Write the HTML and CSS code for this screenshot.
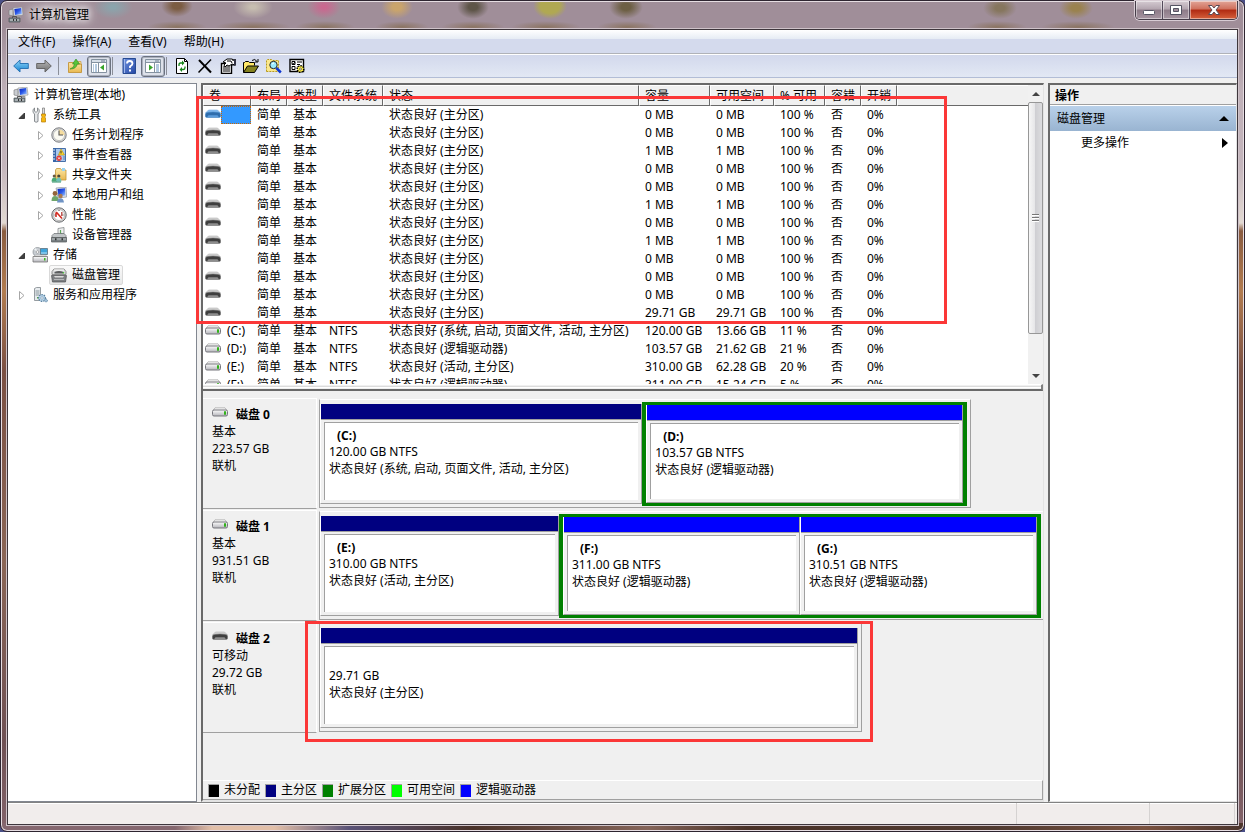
FILE: index.html
```html
<!DOCTYPE html>
<html lang="zh-CN">
<head>
<meta charset="utf-8">
<title>计算机管理</title>
<link rel="stylesheet" href="styles.css">
</head>
<body>
<svg class="defs" aria-hidden="true">
  <defs>
    <linearGradient id="gScreen" x1="0" y1="0" x2="1" y2="1"><stop offset="0" stop-color="#0a22b8"/><stop offset=".5" stop-color="#2a58e8"/><stop offset="1" stop-color="#a8d0ff"/></linearGradient>
    <linearGradient id="gBlue" x1="0" y1="0" x2="0" y2="1"><stop offset="0" stop-color="#8fd4f8"/><stop offset="1" stop-color="#1583d2"/></linearGradient>
    <linearGradient id="gGray" x1="0" y1="0" x2="0" y2="1"><stop offset="0" stop-color="#b8b8b8"/><stop offset="1" stop-color="#6e6e6e"/></linearGradient>
    <linearGradient id="gMetal" x1="0" y1="0" x2="0" y2="1"><stop offset="0" stop-color="#fdfdfd"/><stop offset="1" stop-color="#b4b4ba"/></linearGradient>
    <linearGradient id="gFolder" x1="0" y1="0" x2="0" y2="1"><stop offset="0" stop-color="#fbe6a4"/><stop offset="1" stop-color="#e8b850"/></linearGradient>
    <linearGradient id="gHelp" x1="0" y1="0" x2="1" y2="1"><stop offset="0" stop-color="#6f92e0"/><stop offset="1" stop-color="#2447a4"/></linearGradient>
  </defs>
  <symbol id="computer" viewBox="0 0 16 16">
    <path d="M1 3l4-1v7l-4-1z" fill="#c9ccd0" stroke="#777" stroke-width=".6"/><path d="M5 1l9-1 1 8-9 1z" fill="#e4e6e8" stroke="#8a8d90" stroke-width=".6"/>
    <path d="M6.3 1.9l6.8-.8.8 6-6.8.8z" fill="url(#gScreen)"/><path d="M9 9h3l1 1.5H8z" fill="#999"/>
    <path d="M1 11h11v4H1z" fill="#7c8589" stroke="#4c5356" stroke-width=".7"/><path d="M4.500 11V9.500h4V11" fill="none" stroke="#555" stroke-width="1"/><path d="M2 13h9" stroke="#cfd6d8"/><path d="M5 12h1v2H5zM8 12h1v2H8z" fill="#333"/>
  </symbol>
  <symbol id="tools" viewBox="0 0 16 16">
    <path d="M2.500 1v3l1.500 1.500L5.500 4V1C7.500 2 8 5 6 7v7.500q-2 1.500-3.500 0V7C0 5 1 2 2.500 1z" fill="#e4e6e8" stroke="#6d7276" stroke-width=".8"/>
    <path d="M10.500 1h2v6h-2z" fill="#ddd" stroke="#777" stroke-width=".7"/><path d="M9.500 7h4v2l-1 1 1 1v4h-4v-4l1-1-1-1z" fill="#f7b80e" stroke="#b47a05" stroke-width=".7"/>
  </symbol>
  <symbol id="clock" viewBox="0 0 16 16">
    <circle cx="8" cy="8" r="7.200" fill="#d6d8da" stroke="#6f7174" stroke-width=".9"/><circle cx="8" cy="8" r="5.600" fill="#fbfaf2" stroke="#a8a8a8" stroke-width=".6"/>
    <path d="M8 8V2.400A5.600 5.600 0 0 1 13.600 8z" fill="#f5dda0"/><path d="M8 3.500V8h4" fill="none" stroke="#555" stroke-width="1.100"/>
  </symbol>
  <symbol id="events" viewBox="0 0 16 16">
    <path d="M2.500 1.500h12v13h-12z" fill="#a9c8ee" stroke="#466fa8"/><path d="M2 1h3v14H2z" fill="#3766a8"/><path d="M1 3h3M1 6h3M1 9h3M1 12h3" stroke="#e6eef8"/>
    <path d="M10 2l3.500 6h-6z" fill="#ffd92e" stroke="#b58d05" stroke-width=".6"/><path d="M10 4v2.500" stroke="#333"/><circle cx="8" cy="11.300" r="2.700" fill="#e23c38"/><path d="M7 10.300l2 2m0-2l-2 2" stroke="#fff" stroke-width=".8"/><path d="M12 10h2M12 12h2" stroke="#5b83ba"/>
  </symbol>
  <symbol id="shared" viewBox="0 0 16 16">
    <path d="M4.500 3l1-1.500h4l1 1.500h4.500v10h-10.500z" fill="url(#gFolder)" stroke="#c29536" stroke-width=".8"/><path d="M11 1h3v3h-3z" fill="#9ad4f2"/>
    <circle cx="3.300" cy="9" r="1.600" fill="#6b5a40"/><circle cx="7.800" cy="9" r="1.600" fill="#4e4638"/><path d="M.5 14.500q.3-4 2.800-4t2.700 4z" fill="#4aa873"/><path d="M5 14.500q.5-4 2.800-4t2.700 4z" fill="#6fbfb8"/><path d="M1 15h9" stroke="#2c8f68"/>
  </symbol>
  <symbol id="users" viewBox="0 0 16 16">
    <path d="M5 1l10-1 .7 10L7 11z" fill="#dfe3ea" stroke="#7f8792" stroke-width=".6"/><path d="M6.500 2l7.500-.8.5 7.300-7 .7z" fill="url(#gScreen)"/>
    <circle cx="4" cy="6.500" r="2.400" fill="#93653a"/><path d="M.5 14q0-5 3.500-5t4 5z" fill="#6fa66a"/><circle cx="9.500" cy="9" r="2.200" fill="#a9794e"/><path d="M6 15.500q.5-4.300 3.500-4.300t3.500 4.300z" fill="#6f93c4"/>
  </symbol>
  <symbol id="perf" viewBox="0 0 16 16">
    <circle cx="8" cy="8" r="7.200" fill="#d8d8d8" stroke="#66696c"/><circle cx="8" cy="8" r="5.500" fill="#fff" stroke="#999" stroke-width=".6"/>
    <path d="M5 10V5.500M5.200 5l5.800 6.500" stroke="#d42b22" stroke-width="1.600"/><path d="M10.800 5v4" stroke="#b43b35" stroke-width="1.300"/><path d="M8 3v1M3.500 8h1M11.500 8h1" stroke="#444"/>
  </symbol>
  <symbol id="device" viewBox="0 0 16 16">
    <path d="M7 1.500l6-1v8H7z" fill="#eef0f0" stroke="#85898c" stroke-width=".8"/><path d="M9.500 3v3.500h2" fill="none" stroke="#5aa958" stroke-width="1.200"/>
    <path d="M1 8.500l2-2h10l2 2V11H1z" fill="#c1c5c7" stroke="#676c6f" stroke-width=".7"/><path d="M.5 10.500h15v4.500H.5z" fill="#7b8285" stroke="#515658" stroke-width=".7"/><path d="M1 12h14" stroke="#c0c5c7"/><path d="M4 11.300h1.500v2H4zM10.500 11.300H12v2h-1.500z" fill="#303436"/>
  </symbol>
  <symbol id="storage" viewBox="0 0 16 16">
    <circle cx="5.500" cy="5" r="4.500" fill="#c8cdd2" stroke="#868c90" stroke-width=".7"/><path d="M5.500 5L2 2.500 4 1z" fill="#f0f4f6"/><circle cx="5.500" cy="5" r="1.300" fill="#fff" stroke="#777" stroke-width=".5"/>
    <path d="M8.500 1.500h7v6h-7z" fill="#3fa4dc" stroke="#5d7280" stroke-width=".8"/><path d="M9 6h6" stroke="#b7dff4"/>
    <path d="M2 9.500l1.500-1.500h10L15 9.500z" fill="#eee" stroke="#999" stroke-width=".5"/><path d="M1 9.500h14.500v5.500H1z" fill="url(#gMetal)" stroke="#777" stroke-width=".8"/><path d="M12 11h1.500v2.500H12z" fill="#39b926"/>
  </symbol>
  <symbol id="diskmgr" viewBox="0 0 16 16">
    <path d="M1 4.500l2-2.500h10l2 2.500v3H1z" fill="#d9dadb" stroke="#777" stroke-width=".8"/><path d="M3.500 5q4.500-2 9 0v1.500h-9z" fill="#5a5c5e"/><path d="M3 3h10" stroke="#fff"/><circle cx="12.500" cy="5.800" r=".8" fill="#4c3"/>
    <path d="M.5 8.500h15l-1 6.500h-13z" fill="#7d7f82" stroke="#4c4e50" stroke-width=".7"/><path d="M3 9h10l-1 1.500h-8z" fill="#dadada"/><path d="M3 12.500h10" stroke="#b5b7b9"/>
  </symbol>
  <symbol id="services" viewBox="0 0 16 16">
    <path d="M2.500 1.500l2-1h4v13h-6z" fill="#e7ebee" stroke="#7e878c" stroke-width=".8"/><path d="M3.500 4h4M3.500 6h4M3.500 8h4" stroke="#8b989e"/><path d="M5 10h2v1.500H5z" fill="#57a34d"/>
    <circle cx="10" cy="11" r="3.400" fill="#b8d3e8" stroke="#58809e" stroke-width="1.200" stroke-dasharray="1.500 1"/><circle cx="10" cy="11" r="1.200" fill="#fff" stroke="#58809e" stroke-width=".5"/><circle cx="14" cy="13.500" r="1.500" fill="#a5c3db" stroke="#58809e" stroke-width=".8" stroke-dasharray="1 .6"/>
  </symbol>
  <symbol id="drive" viewBox="0 0 16 10">
    <path d="M3 .8h10l2 2.700H1z" fill="#f4f4f4" stroke="#b0b0b0" stroke-width=".8"/><rect x=".5" y="3" width="15" height="6" rx="1.500" fill="url(#gMetal)" stroke="#77777d"/><path d="M12 4.300h2v3.400h-2z" fill="#32b21a"/>
  </symbol>
  <symbol id="removable" viewBox="0 0 16 10">
    <path d="M3.500 1h9l3 3H.5z" fill="#d4d4d4" stroke="#b4b4b4" stroke-width=".6"/><path d="M.3 5.200Q.5 3.600 3 3.300q5-.8 10 0 2.500.3 2.700 1.900v2q-.3 1.300-1.700 1.300H2Q.6 8.500.3 7.200z" fill="#3f3f3f" stroke="#8a8a8a" stroke-width=".6"/><path d="M3.500 6.300h9l1.300 1.700H2.200z" fill="#8e8e8e"/>
  </symbol>
  <symbol id="removable-sel" viewBox="0 0 16 10">
    <path d="M3.500 1h9l3 3H.5z" fill="#86bdf0" stroke="#7ab0e4" stroke-width=".6"/><path d="M.3 5.200Q.5 3.600 3 3.300q5-.8 10 0 2.500.3 2.700 1.900v2q-.3 1.300-1.700 1.300H2Q.6 8.500.3 7.200z" fill="#2f6dac" stroke="#4f90cf" stroke-width=".6"/><path d="M3.500 6.300h9l1.300 1.700H2.200z" fill="#5b9cdc"/>
  </symbol>
  <symbol id="back" viewBox="0 0 16 16"><path d="M.7 8L7 2v3.500h8.300v5H7V14z" fill="url(#gBlue)" stroke="#2b75b5" stroke-linejoin="round"/></symbol>
  <symbol id="forward" viewBox="0 0 16 16"><path d="M15.300 8L9 2v3.500H.7v5H9V14z" fill="url(#gGray)" stroke="#666" stroke-linejoin="round"/></symbol>
  <symbol id="folderup" viewBox="0 0 16 16"><path d="M1.500 4.500h5l1 1.500h7v8.500h-13z" fill="url(#gFolder)" stroke="#c79b45"/><path d="M9 3.500h5V6H9z" fill="#f8dc94" stroke="#c79b45" stroke-width=".7"/><path d="M3 11q4-1 4.500-5H5.500L9 1l3.500 5h-2.300Q9.500 11 3 11z" fill="#58c43b" stroke="#2c8a1e" stroke-width=".6"/></symbol>
  <symbol id="paneleft" viewBox="0 0 16 16"><path d="M.5 1.500h15v13H.5z" fill="#fff" stroke="#8492a0"/><path d="M1 2h14v2H1z" fill="#d7dfe8"/><path d="M1 4.500h14M7.500 5v9.500" stroke="#8492a0"/><path d="M10 3h4" stroke="#6c7d90"/><path d="M2 7h4M2 9h4M2 11h4M2 13h4" stroke="#6993bf" stroke-dasharray="1 1 2"/><path d="M13 6.500v6L9 9.500z" fill="#37a42a"/></symbol>
  <symbol id="paneright" viewBox="0 0 16 16"><path d="M.5 1.500h15v13H.5z" fill="#fff" stroke="#8492a0"/><path d="M1 2h14v2H1z" fill="#d7dfe8"/><path d="M1 4.500h14M9.500 5v9.500" stroke="#8492a0"/><path d="M10 3h4" stroke="#6c7d90"/><path d="M11 7h3M11 9h3M11 11h3M11 13h3" stroke="#6993bf"/><path d="M4 6.500v6l4-3z" fill="#37a42a"/></symbol>
  <symbol id="help" viewBox="0 0 16 16"><path d="M2 .5h12.500v15H2z" fill="url(#gHelp)" stroke="#264a92"/><path d="M3.500 1v14" stroke="#9fb7ec"/><path d="M6 5.500Q6 3 8.700 3t2.800 2.500Q11.500 7 9 8.500V10" fill="none" stroke="#fff" stroke-width="1.800"/><path d="M8 11.500h2v2H8z" fill="#fff"/></symbol>
  <symbol id="refresh" viewBox="0 0 16 16"><path d="M2.500.5h8l3 3v12h-11z" fill="#fff" stroke="#000"/><path d="M10.500.5v3h3" fill="none" stroke="#000"/><path d="M8 5H6.500Q5 5 5 7v1M8 11.500h1.500q1.500 0 1.500-2v-1" fill="none" stroke="#16851a" stroke-width="1.300"/><path d="M8 2.500v5L10.500 5zM8 9v5l-2.500-2.500z" fill="#16851a"/></symbol>
  <symbol id="delete" viewBox="0 0 16 16"><path d="M2 2l12 12.500" stroke="#000" stroke-width="2"/><path d="M14 1.500L1.500 14.500" stroke="#000" stroke-width="1.500"/></symbol>
  <symbol id="props" viewBox="0 0 16 16"><path d="M1.500 5.500h10v10h-10z" fill="#fff" stroke="#000" stroke-width="1.400"/><path d="M3 9h7M3 11h7M3 13h7" stroke="#000"/><path d="M3 4l4-3h5l3 2v4l-3-1-3 2-2-1-2 2-1-2 2-2z" fill="#fff" stroke="#000"/><path d="M7 3h4l1 2M12 2h4M12 7h4" fill="none" stroke="#000"/><path d="M14 1h2v6h-2z" fill="#334"/></symbol>
  <symbol id="open" viewBox="0 0 16 16"><path d="M.5 14.500v-10h1l1-1h3l1 1h5v3" fill="#ffe868" stroke="#000"/><path d="M.5 14.500l4-6.500h11l-4 6.500z" fill="#84821e" stroke="#000"/><path d="M9 2.500q3-2.500 5 1M12 4h3V1" fill="none" stroke="#000"/></symbol>
  <symbol id="find" viewBox="0 0 16 16"><path d="M.5 13.500v-11l1-1h4l1 1h6v11z" fill="#fbe88a" stroke="#b99c1e" stroke-dasharray="2 1"/><circle cx="7.500" cy="7" r="3.700" fill="#99eaff" stroke="#222"/><path d="M10.300 10l4.500 4.500" stroke="#0c36d0" stroke-width="2.500"/><path d="M6 6l2-1" stroke="#fff"/></symbol>
  <symbol id="settings" viewBox="0 0 16 16"><path d="M1 1.500h13.500v12H1z" fill="#fff" stroke="#000" stroke-width="1.400"/><path d="M3 3.500h3v3H3zM3 8.500h3v3H3z" fill="#fff" stroke="#000"/><path d="M8 4h5M8 6.500h3M8 9h2" stroke="#000"/><path d="M3.500 5l1 1 1.500-2" stroke="#000" fill="none"/><circle cx="11.500" cy="11" r="3.300" fill="#fff04a" stroke="#000" stroke-width="1.500" stroke-dasharray="1.500 1"/><circle cx="11.500" cy="11" r="1" fill="#fff" stroke="#000" stroke-width=".5"/></symbol>
  <symbol id="closed" viewBox="0 0 10 10"><path d="M2.500 1.500L7 5.500 2.500 9.500z" fill="#fff" stroke="#a6a6a6"/></symbol>
  <symbol id="opened" viewBox="0 0 10 10"><path d="M7.500 3v5.500H2z" fill="#404040" stroke="#222" stroke-width=".8"/></symbol>
</svg>

<div class="window">
  <header class="titlebar">
    <svg class="icon"><use href="#computer"/></svg>
    <h1 class="title">计算机管理</h1>
    <div class="caption">
      <button class="cap" aria-label="最小化"><svg width="14" height="12" viewBox="0 0 14 12"><rect x="1.500" y="6.500" width="11" height="4" rx="1" fill="#fff" stroke="#555463"/></svg></button>
      <button class="cap" aria-label="最大化"><svg width="14" height="12" viewBox="0 0 14 12"><path d="M1.500 1.500h11v9h-11z" fill="#fff" stroke="#555463"/><path d="M4.500 4.500h5v3h-5z" fill="#9e8c99" stroke="#555463"/></svg></button>
      <button class="cap close" aria-label="关闭"><svg width="14" height="12" viewBox="0 0 14 12"><path d="M1.500 1.500h3.500l2 2.500 2-2.500h3.500L9 6l3.500 4.500H9L7 8l-2 2.500H1.500L5 6z" fill="#fff" stroke="#5a4a55"/></svg></button>
    </div>
  </header>
  <div class="client">
    <nav class="menubar">
      <button class="menu">文件(F)</button><button class="menu">操作(A)</button><button class="menu">查看(V)</button><button class="menu">帮助(H)</button>
    </nav>
    <div class="toolbar">
      <button class="tool" aria-label="后退"><svg class="icon"><use href="#back"/></svg></button>
      <button class="tool" aria-label="前进"><svg class="icon"><use href="#forward"/></svg></button>
      <i class="sep"></i>
      <button class="tool wide" aria-label="上一级"><svg class="icon"><use href="#folderup"/></svg></button>
      <button class="tool pressed" aria-label="显示控制台树"><svg class="icon"><use href="#paneleft"/></svg></button>
      <i class="sep"></i>
      <button class="tool wide" aria-label="帮助"><svg class="icon"><use href="#help"/></svg></button>
      <button class="tool pressed" aria-label="显示操作窗格"><svg class="icon"><use href="#paneright"/></svg></button>
      <i class="sep"></i>
      <button class="tool" aria-label="刷新"><svg class="icon"><use href="#refresh"/></svg></button>
      <button class="tool" aria-label="删除"><svg class="icon"><use href="#delete"/></svg></button>
      <button class="tool" aria-label="属性"><svg class="icon"><use href="#props"/></svg></button>
      <button class="tool" aria-label="打开"><svg class="icon"><use href="#open"/></svg></button>
      <button class="tool" aria-label="查找"><svg class="icon"><use href="#find"/></svg></button>
      <button class="tool" aria-label="设置"><svg class="icon"><use href="#settings"/></svg></button>
    </div>
    <main class="panes">
      <ul class="tree">
        <li class="node root"><span class="label"><svg class="icon"><use href="#computer"/></svg>计算机管理(本地)</span></li>
        <li class="node"><svg class="exp"><use href="#opened"/></svg><span class="label"><svg class="icon"><use href="#tools"/></svg>系统工具</span></li>
        <li class="node deep"><svg class="exp"><use href="#closed"/></svg><span class="label"><svg class="icon"><use href="#clock"/></svg>任务计划程序</span></li>
        <li class="node deep"><svg class="exp"><use href="#closed"/></svg><span class="label"><svg class="icon"><use href="#events"/></svg>事件查看器</span></li>
        <li class="node deep"><svg class="exp"><use href="#closed"/></svg><span class="label"><svg class="icon"><use href="#shared"/></svg>共享文件夹</span></li>
        <li class="node deep"><svg class="exp"><use href="#closed"/></svg><span class="label"><svg class="icon"><use href="#users"/></svg>本地用户和组</span></li>
        <li class="node deep"><svg class="exp"><use href="#closed"/></svg><span class="label"><svg class="icon"><use href="#perf"/></svg>性能</span></li>
        <li class="node deep"><i class="exp"></i><span class="label"><svg class="icon"><use href="#device"/></svg>设备管理器</span></li>
        <li class="node"><svg class="exp"><use href="#opened"/></svg><span class="label"><svg class="icon"><use href="#storage"/></svg>存储</span></li>
        <li class="node deep"><i class="exp"></i><span class="label selected"><svg class="icon"><use href="#diskmgr"/></svg>磁盘管理</span></li>
        <li class="node"><svg class="exp"><use href="#closed"/></svg><span class="label"><svg class="icon"><use href="#services"/></svg>服务和应用程序</span></li>
      </ul>

      <section class="center">
        <div class="list">
          <div class="viewport">
            <table class="volumes">
              <colgroup><col class="c-vol"><col class="c-short"><col class="c-short"><col class="c-fs"><col class="c-state"><col class="c-cap"><col class="c-free"><col class="c-pct"><col class="c-short"><col class="c-short"><col></colgroup>
              <thead><tr><th>卷</th><th>布局</th><th>类型</th><th>文件系统</th><th>状态</th><th>容量</th><th>可用空间</th><th>% 可用</th><th>容错</th><th>开销</th><th></th></tr></thead>
              <tbody>
                <tr><td class="vol"><div class="volname"><svg class="drive"><use href="#removable-sel"/></svg><span class="name picked"></span></div></td><td>简单</td><td>基本</td><td></td><td>状态良好 (主分区)</td><td>0 MB</td><td>0 MB</td><td>100 %</td><td>否</td><td>0%</td><td></td></tr>
                <tr><td class="vol"><div class="volname"><svg class="drive"><use href="#removable"/></svg></div></td><td>简单</td><td>基本</td><td></td><td>状态良好 (主分区)</td><td>0 MB</td><td>0 MB</td><td>100 %</td><td>否</td><td>0%</td><td></td></tr>
                <tr><td class="vol"><div class="volname"><svg class="drive"><use href="#removable"/></svg></div></td><td>简单</td><td>基本</td><td></td><td>状态良好 (主分区)</td><td>1 MB</td><td>1 MB</td><td>100 %</td><td>否</td><td>0%</td><td></td></tr>
                <tr><td class="vol"><div class="volname"><svg class="drive"><use href="#removable"/></svg></div></td><td>简单</td><td>基本</td><td></td><td>状态良好 (主分区)</td><td>0 MB</td><td>0 MB</td><td>100 %</td><td>否</td><td>0%</td><td></td></tr>
                <tr><td class="vol"><div class="volname"><svg class="drive"><use href="#removable"/></svg></div></td><td>简单</td><td>基本</td><td></td><td>状态良好 (主分区)</td><td>0 MB</td><td>0 MB</td><td>100 %</td><td>否</td><td>0%</td><td></td></tr>
                <tr><td class="vol"><div class="volname"><svg class="drive"><use href="#removable"/></svg></div></td><td>简单</td><td>基本</td><td></td><td>状态良好 (主分区)</td><td>1 MB</td><td>1 MB</td><td>100 %</td><td>否</td><td>0%</td><td></td></tr>
                <tr><td class="vol"><div class="volname"><svg class="drive"><use href="#removable"/></svg></div></td><td>简单</td><td>基本</td><td></td><td>状态良好 (主分区)</td><td>0 MB</td><td>0 MB</td><td>100 %</td><td>否</td><td>0%</td><td></td></tr>
                <tr><td class="vol"><div class="volname"><svg class="drive"><use href="#removable"/></svg></div></td><td>简单</td><td>基本</td><td></td><td>状态良好 (主分区)</td><td>1 MB</td><td>1 MB</td><td>100 %</td><td>否</td><td>0%</td><td></td></tr>
                <tr><td class="vol"><div class="volname"><svg class="drive"><use href="#removable"/></svg></div></td><td>简单</td><td>基本</td><td></td><td>状态良好 (主分区)</td><td>0 MB</td><td>0 MB</td><td>100 %</td><td>否</td><td>0%</td><td></td></tr>
                <tr><td class="vol"><div class="volname"><svg class="drive"><use href="#removable"/></svg></div></td><td>简单</td><td>基本</td><td></td><td>状态良好 (主分区)</td><td>0 MB</td><td>0 MB</td><td>100 %</td><td>否</td><td>0%</td><td></td></tr>
                <tr><td class="vol"><div class="volname"><svg class="drive"><use href="#removable"/></svg></div></td><td>简单</td><td>基本</td><td></td><td>状态良好 (主分区)</td><td>0 MB</td><td>0 MB</td><td>100 %</td><td>否</td><td>0%</td><td></td></tr>
                <tr><td class="vol"><div class="volname"><svg class="drive"><use href="#removable"/></svg></div></td><td>简单</td><td>基本</td><td></td><td>状态良好 (主分区)</td><td>29.71 GB</td><td>29.71 GB</td><td>100 %</td><td>否</td><td>0%</td><td></td></tr>
                <tr><td class="vol"><div class="volname"><svg class="drive"><use href="#drive"/></svg><span class="name">(C:)</span></div></td><td>简单</td><td>基本</td><td>NTFS</td><td>状态良好 (系统, 启动, 页面文件, 活动, 主分区)</td><td>120.00 GB</td><td>13.66 GB</td><td>11 %</td><td>否</td><td>0%</td><td></td></tr>
                <tr><td class="vol"><div class="volname"><svg class="drive"><use href="#drive"/></svg><span class="name">(D:)</span></div></td><td>简单</td><td>基本</td><td>NTFS</td><td>状态良好 (逻辑驱动器)</td><td>103.57 GB</td><td>21.62 GB</td><td>21 %</td><td>否</td><td>0%</td><td></td></tr>
                <tr><td class="vol"><div class="volname"><svg class="drive"><use href="#drive"/></svg><span class="name">(E:)</span></div></td><td>简单</td><td>基本</td><td>NTFS</td><td>状态良好 (活动, 主分区)</td><td>310.00 GB</td><td>62.28 GB</td><td>20 %</td><td>否</td><td>0%</td><td></td></tr>
                <tr><td class="vol"><div class="volname"><svg class="drive"><use href="#drive"/></svg><span class="name">(F:)</span></div></td><td>简单</td><td>基本</td><td>NTFS</td><td>状态良好 (逻辑驱动器)</td><td>311.00 GB</td><td>15.24 GB</td><td>5 %</td><td>否</td><td>0%</td><td></td></tr>
              </tbody>
            </table>
          </div>
          <div class="scrollbar">
            <button class="arrow" aria-label="向上滚动"><svg width="8" height="4" viewBox="0 0 8 4"><path d="M4 0l4 4H0z" fill="#444"/></svg></button>
            <div class="thumb"><i></i><i></i><i></i></div>
            <button class="arrow" aria-label="向下滚动"><svg width="8" height="4" viewBox="0 0 8 4"><path d="M0 0h8L4 4z" fill="#444"/></svg></button>
          </div>
          <div class="mark mark-list"></div>
        </div>
        <div class="splitter"></div>
        <div class="disks">
          <div class="disk">
            <div class="info"><h2 class="dname"><svg class="drive"><use href="#drive"/></svg>磁盘 0</h2><p>基本</p><p>223.57 GB</p><p>联机</p></div>
            <div class="track"><div class="graph g0">
              <div class="part"><div class="bar"></div><div class="body"><b>(C:)</b><p>120.00 GB NTFS</p><p>状态良好 (系统, 启动, 页面文件, 活动, 主分区)</p></div></div>
              <div class="extended"><div class="part logical"><div class="bar"></div><div class="body"><b>(D:)</b><p>103.57 GB NTFS</p><p>状态良好 (逻辑驱动器)</p></div></div></div>
            </div></div>
          </div>
          <div class="disk">
            <div class="info"><h2 class="dname"><svg class="drive"><use href="#drive"/></svg>磁盘 1</h2><p>基本</p><p>931.51 GB</p><p>联机</p></div>
            <div class="track"><div class="graph g1">
              <div class="part"><div class="bar"></div><div class="body"><b>(E:)</b><p>310.00 GB NTFS</p><p>状态良好 (活动, 主分区)</p></div></div>
              <div class="extended pair"><div class="part logical"><div class="bar"></div><div class="body"><b>(F:)</b><p>311.00 GB NTFS</p><p>状态良好 (逻辑驱动器)</p></div></div><div class="part logical"><div class="bar"></div><div class="body"><b>(G:)</b><p>310.51 GB NTFS</p><p>状态良好 (逻辑驱动器)</p></div></div></div>
            </div></div>
          </div>
          <div class="disk">
            <div class="info"><h2 class="dname"><svg class="drive"><use href="#removable"/></svg>磁盘 2</h2><p>可移动</p><p>29.72 GB</p><p>联机</p></div>
            <div class="track"><div class="graph g2">
              <div class="part"><div class="bar"></div><div class="body"><b></b><p>29.71 GB</p><p>状态良好 (主分区)</p></div></div>
              <div class="mark mark-disk"></div>
            </div></div>
          </div>
        </div>
        <div class="legend">
          <span class="key"><i class="sw black"></i>未分配</span><span class="key"><i class="sw navy"></i>主分区</span><span class="key"><i class="sw green"></i>扩展分区</span><span class="key"><i class="sw lime"></i>可用空间</span><span class="key"><i class="sw blue"></i>逻辑驱动器</span>
        </div>
      </section>

      <aside class="actions">
        <h2 class="ahead">操作</h2>
        <button class="agroup">磁盘管理<svg width="10" height="5" viewBox="0 0 10 5"><path d="M5 0l5 5H0z"/></svg></button>
        <button class="aitem">更多操作<svg width="6" height="10" viewBox="0 0 6 10"><path d="M0 0l6 5-6 5z"/></svg></button>
      </aside>
    </main>
    <footer class="status"><span class="cell grow"></span><span class="cell mid"></span><span class="cell end"></span></footer>
  </div>
</div>
</body>
</html>
```
FILE: styles.css
```css
* { box-sizing: border-box; }
html, body { height: 100%; margin: 0; }
body {
  background: #4a4f86;
  color: #000;
  font: 12px/18px "Noto Sans", "Noto Sans CJK SC", sans-serif;
  overflow: hidden;
}
h1, h2, p, ul { margin: 0; padding: 0; font-size: 12px; font-weight: normal; }
button { margin: 0; padding: 0; border: 0; background: none; font: inherit; color: inherit; }
svg { flex: none; display: block; }
.defs { position: absolute; width: 0; height: 0; }
.icon { width: 16px; height: 16px; }
.drive { width: 16px; height: 10px; }

/* window frame */
.window {
  height: 100%;
  display: flex;
  flex-direction: column;
  padding: 0 6px 6px;
  border: 1px solid #2e2530;
  border-radius: 7px;
  box-shadow: inset 0 0 0 1px #e6dde2;
  background:
    linear-gradient(90deg, #85676f, #85676f 14%, #e2bfa8 17%, #e2bfa8 22%, #5b5377 28%, #4a3229 38%, #85655a 52%, #4a3228 60%, #503a30 80%, #7a5240 92%, #4b342c) bottom / 100% 8px no-repeat,
    radial-gradient(ellipse at center, #7b5c42 20%, transparent 70%) 160px -6px / 32px 22px no-repeat,
    radial-gradient(ellipse at center, #8ba4ac 10%, transparent 70%) 92px -6px / 40px 24px no-repeat,
    radial-gradient(ellipse at center, #c6bdb0 10%, transparent 70%) 232px -6px / 40px 24px no-repeat,
    radial-gradient(ellipse at center, #c9688f 10%, transparent 70%) 306px -6px / 34px 24px no-repeat,
    radial-gradient(ellipse at center, #c9a46c 20%, transparent 70%) 380px -6px / 32px 24px no-repeat,
    radial-gradient(ellipse at center, #5e5548 20%, transparent 70%) 456px -6px / 32px 24px no-repeat,
    radial-gradient(ellipse at center, #b0a852 40%, transparent 70%) 532px -8px / 34px 26px no-repeat,
    radial-gradient(ellipse at center, #6d5f44 20%, transparent 70%) 608px -6px / 34px 24px no-repeat,
    radial-gradient(ellipse at center, #86765e 20%, transparent 70%) 982px -4px / 34px 22px no-repeat,
    radial-gradient(ellipse at center, #9a824f 20%, transparent 70%) 1058px -4px / 34px 22px no-repeat,
    radial-gradient(ellipse at center, #8b7462, transparent 70%) 146px 20px / 60px 12px no-repeat,
    radial-gradient(ellipse at center, #8b7462, transparent 70%) 214px 20px / 76px 12px no-repeat,
    radial-gradient(ellipse at center, #8b7462, transparent 70%) 294px 20px / 60px 12px no-repeat,
    radial-gradient(ellipse at center, #8b7462, transparent 70%) 374px 20px / 54px 12px no-repeat,
    radial-gradient(ellipse at center, #8b7462, transparent 70%) 440px 20px / 64px 12px no-repeat,
    radial-gradient(ellipse at center, #8b7462, transparent 70%) 510px 20px / 70px 12px no-repeat,
    radial-gradient(ellipse at center, #8b7462, transparent 70%) 596px 20px / 60px 12px no-repeat,
    radial-gradient(ellipse at center, #8b7462, transparent 70%) 966px 20px / 60px 12px no-repeat,
    radial-gradient(ellipse at center, #8b7462, transparent 70%) 1040px 20px / 74px 12px no-repeat,
    linear-gradient(180deg, #a08e99 0, #a08e99 28px, #bfb0b8 90px, #c4b5bc 165px, #e2d9d2 222px, #8a5c40 230px, #b27c50 290px, #7b5043 370px, #8b6656 560px, #6f5154 740px, #84646b);
}
.titlebar {
  flex: none;
  height: 28px;
  display: flex;
  align-items: center;
  gap: 5px;
  padding-left: 1px;
}
.title {
  padding: 0 12px 0 0;
  text-shadow: 0 0 6px #fff, 0 0 10px #fff, 0 0 14px #fff;
}
.caption {
  margin-left: auto;
  align-self: flex-start;
  display: flex;
  border: 1px solid #453c48;
  border-top: 0;
  border-radius: 0 0 5px 5px;
  box-shadow: 0 0 0 1px #d8ccd4;
  overflow: hidden;
}
.cap {
  width: 27px;
  height: 18px;
  display: grid;
  place-items: center;
  border-right: 1px solid #54495a;
  background: linear-gradient(#d5cbd2, #b3a5af 45%, #8d7b88 50%, #a796a2);
  box-shadow: inset 0 0 0 1px rgba(255, 255, 255, .45);
}
.cap.close { width: 47px; border-right: 0; background: linear-gradient(#e2a598, #cf6f5c 45%, #b02a12 50%, #d6613c); }

.client {
  flex: 1;
  min-height: 0;
  display: flex;
  flex-direction: column;
  border: 1px solid #3e363c;
  outline: 1px solid #cfc3c9;
  background: #f0f0f0;
}
.menubar {
  flex: none;
  height: 24px;
  display: flex;
  gap: 17px;
  padding-left: 10px;
  border-bottom: 1px solid #b0b2b8;
  background: linear-gradient(#fff 0, #e6ecf4 9px, #d4daed 9px, #d4daed);
}
.menu { white-space: nowrap; line-height: 24px; }
.toolbar {
  flex: none;
  height: 24px;
  display: flex;
  align-items: center;
  padding-left: 1px;
  border-top: 1px solid #fff;
  border-bottom: 1px solid #b2bdd6;
  background: linear-gradient(#d2d8ec, #e2e8f4);
}
.tool { width: 23px; height: 21px; display: grid; place-items: center; }
.tool.wide { width: 25px; }
.tool.pressed { width: 24px; border: 1px solid #6b7280; border-radius: 3px; background: #dde1ea; box-shadow: inset 0 0 0 1px #aab0bd; }
.sep { width: 1px; height: 18px; margin: 0 3px; background: #8b8f99; }
.pressed + .sep { margin-left: 1px; }

.panes { flex: 1; min-height: 0; display: flex; gap: 4px; padding-top: 5px; }

/* console tree */
.tree {
  flex: 0 0 189px;
  padding-top: 1px;
  list-style: none;
  background: #fff;
  border-top: 1px solid #828790;
  border-right: 1px solid #828790;
  border-bottom: 1px solid #828790;
}
.node { height: 20px; display: flex; align-items: center; padding-left: 9px; }
.node.root { padding-left: 3px; }
.node.deep { padding-left: 28px; }
.exp { width: 10px; height: 10px; margin-right: 3px; }
.label { height: 20px; display: flex; align-items: center; gap: 5px; padding: 0 2px 0 1px; border: 1px solid transparent; white-space: nowrap; }
.label.selected { border-color: #d9d9d9; border-radius: 2px; background: linear-gradient(#fafafa, #e8e8e8); }

/* volumes */
.center {
  flex: 1;
  min-width: 0;
  display: flex;
  flex-direction: column;
  border-style: solid;
  border-width: 2px 1px 2px 2px;
  border-color: #696969 #e3e3e3 #e3e3e3 #696969;
}
.list { flex: none; height: 299px; position: relative; display: flex; background: #fff; }
.viewport { flex: 1; min-width: 0; overflow: hidden; }
.volumes { width: 100%; table-layout: fixed; border-collapse: separate; border-spacing: 0; }
.c-vol { width: 48px; }
.c-short { width: 36px; }
.c-fs { width: 60px; }
.c-state { width: 256px; }
.c-cap { width: 71px; }
.c-free { width: 64px; }
.c-pct { width: 51px; }
.volumes th {
  height: 21px;
  padding: 0 0 0 5px;
  border: 1px solid #fff;
  border-right-color: #696969;
  border-bottom-color: #696969;
  background: #f0f0f0;
  font-weight: normal;
  text-align: left;
  white-space: nowrap;
}
.volumes th:last-child { border-right: 0; }
.volumes td { height: 18px; padding: 0 0 0 6px; line-height: 18px; white-space: nowrap; }
.volumes .vol { padding: 0 0 0 2px; }
.volname { height: 18px; display: flex; }
.volname .drive { margin-top: 3px; }
.name { flex: 1; padding-left: 6px; }
.name.picked { background: #3399ff; border: 1px dotted #cc6600; }
.scrollbar { flex: 0 0 15px; display: flex; flex-direction: column; background: #f1f1f1; }
.arrow { height: 17px; display: grid; place-items: center; }
.thumb {
  flex: 0 0 232px;
  display: flex;
  flex-direction: column;
  align-items: center;
  justify-content: center;
  gap: 1px;
  margin-bottom: auto;
  border: 1px solid #979797;
  border-radius: 2px;
  background: linear-gradient(90deg, #f6f6f6, #e6e6e8 45%, #cfcfd3 50%, #dcdcde);
}
.thumb i { width: 7px; height: 2px; background: #777; border-bottom: 1px solid #fff; }
.mark { position: absolute; border: 3px solid #fb3737; pointer-events: none; }
.mark-list { left: -7px; right: 96px; top: 11px; height: 228px; }
.splitter { flex: none; height: 7px; border-top: 1px solid #fff; border-bottom: 2px solid #696969; border-right: 2px solid #808080; background: linear-gradient(#f0f0f0 1px, #dcdcdc 1px, #dcdcdc 2px, #fff 2px, #fff 3px, #f0f0f0 3px); }

/* graphical view */
.disks { flex: 1; min-height: 0; padding-top: 7px; }
.disk { height: 112px; display: flex; gap: 2px; }
.info {
  flex: 0 0 114px;
  height: 111px;
  padding: 7px 0 0 9px;
  line-height: 17px;
  border: 1px solid transparent;
  border-width: 1px 1px 1px 0;
  border-color: #fff #fff #a0a0a0;
}
.dname { display: flex; gap: 8px; font-weight: bold; }
.dname .drive { margin-top: 1px; }
.track { flex: 1; min-width: 0; padding-top: 1px; }
.graph { position: relative; height: 109px; display: flex; padding: 2px 3px 1px 0; border: 1px solid #a0a0a0; border-top-color: #fff; }
.g0 { width: 90%; }
.g1 { padding-right: 2px; border-right: 0; }
.g2 { width: 75%; }
.part {
  flex: 1 1 0;
  min-width: 0;
  display: flex;
  flex-direction: column;
  margin: 2px 0;
  border-left: 1px solid #fff;
  border-right: 1px solid #a0a0a0;
  border-bottom: 1px solid #a0a0a0;
}
.bar { height: 16px; background: #000080; border-bottom: 1px solid #a0a0a0; }
.body { flex: 1; margin: 2px 3px 3px; padding: 4px; line-height: 17px; background: #fff; border-left: 1px solid #a0a0a0; border-top: 1px solid #a0a0a0; white-space: nowrap; overflow: hidden; }
.body b { display: block; height: 16px; padding-left: 8px; }
.extended { flex: 1 1 0; min-width: 0; display: flex; border: solid #008000; border-width: 3px 4px; }
.pair { flex-grow: 2; }
.g0 > .part { flex-grow: 325; }
.g0 > .extended { flex-grow: 321; }
.extended .part { margin: 0; }
.logical .bar { background: #0000ff; }
.mark-disk { left: -15px; right: -12px; top: -3px; height: 121px; }

.legend {
  flex: none;
  height: 20px;
  display: flex;
  align-items: center;
  gap: 5px;
  padding-left: 5px;
  border: 1px solid #a0a0a0;
  border-top-color: #fff;
  border-left: 0;
}
.key { display: flex; align-items: center; gap: 5px; }
.sw { width: 11px; height: 13px; border: 1px solid #a0a0a0; border-right: 0; border-bottom: 0; }
.black { background: #000; }
.navy { background: #000080; }
.green { background: #008000; }
.lime { background: #00ff00; }
.blue { background: #0000ff; }

/* actions pane */
.actions { flex: 0 0 189px; display: flex; flex-direction: column; background: #fff; border: 2px solid #696969; border-right: 1px solid #e3e3e3; border-bottom: 1px solid #e3e3e3; }
.ahead { height: 20px; padding-left: 5px; line-height: 22px; font-weight: bold; background: #f0f0f0; border-bottom: 1px solid #a0a0a0; }
.agroup, .aitem { display: flex; align-items: center; justify-content: space-between; text-align: left; }
.agroup { height: 25px; margin-top: 1px; padding: 0 7px; background: linear-gradient(#b9d1ea, #99b4d1); }
.aitem { height: 24px; padding: 0 8px 0 31px; }

.status { flex: none; height: 22px; display: flex; padding-right: 2px; border-top: 1px solid #828282; background: #f1edec; box-shadow: inset 0 1px #fff; }
.cell { border-right: 1px solid #d5d2d1; }
.grow { flex: 1; }
.mid { flex: 0 0 133px; }
.end { flex: 0 0 85px; }
```
